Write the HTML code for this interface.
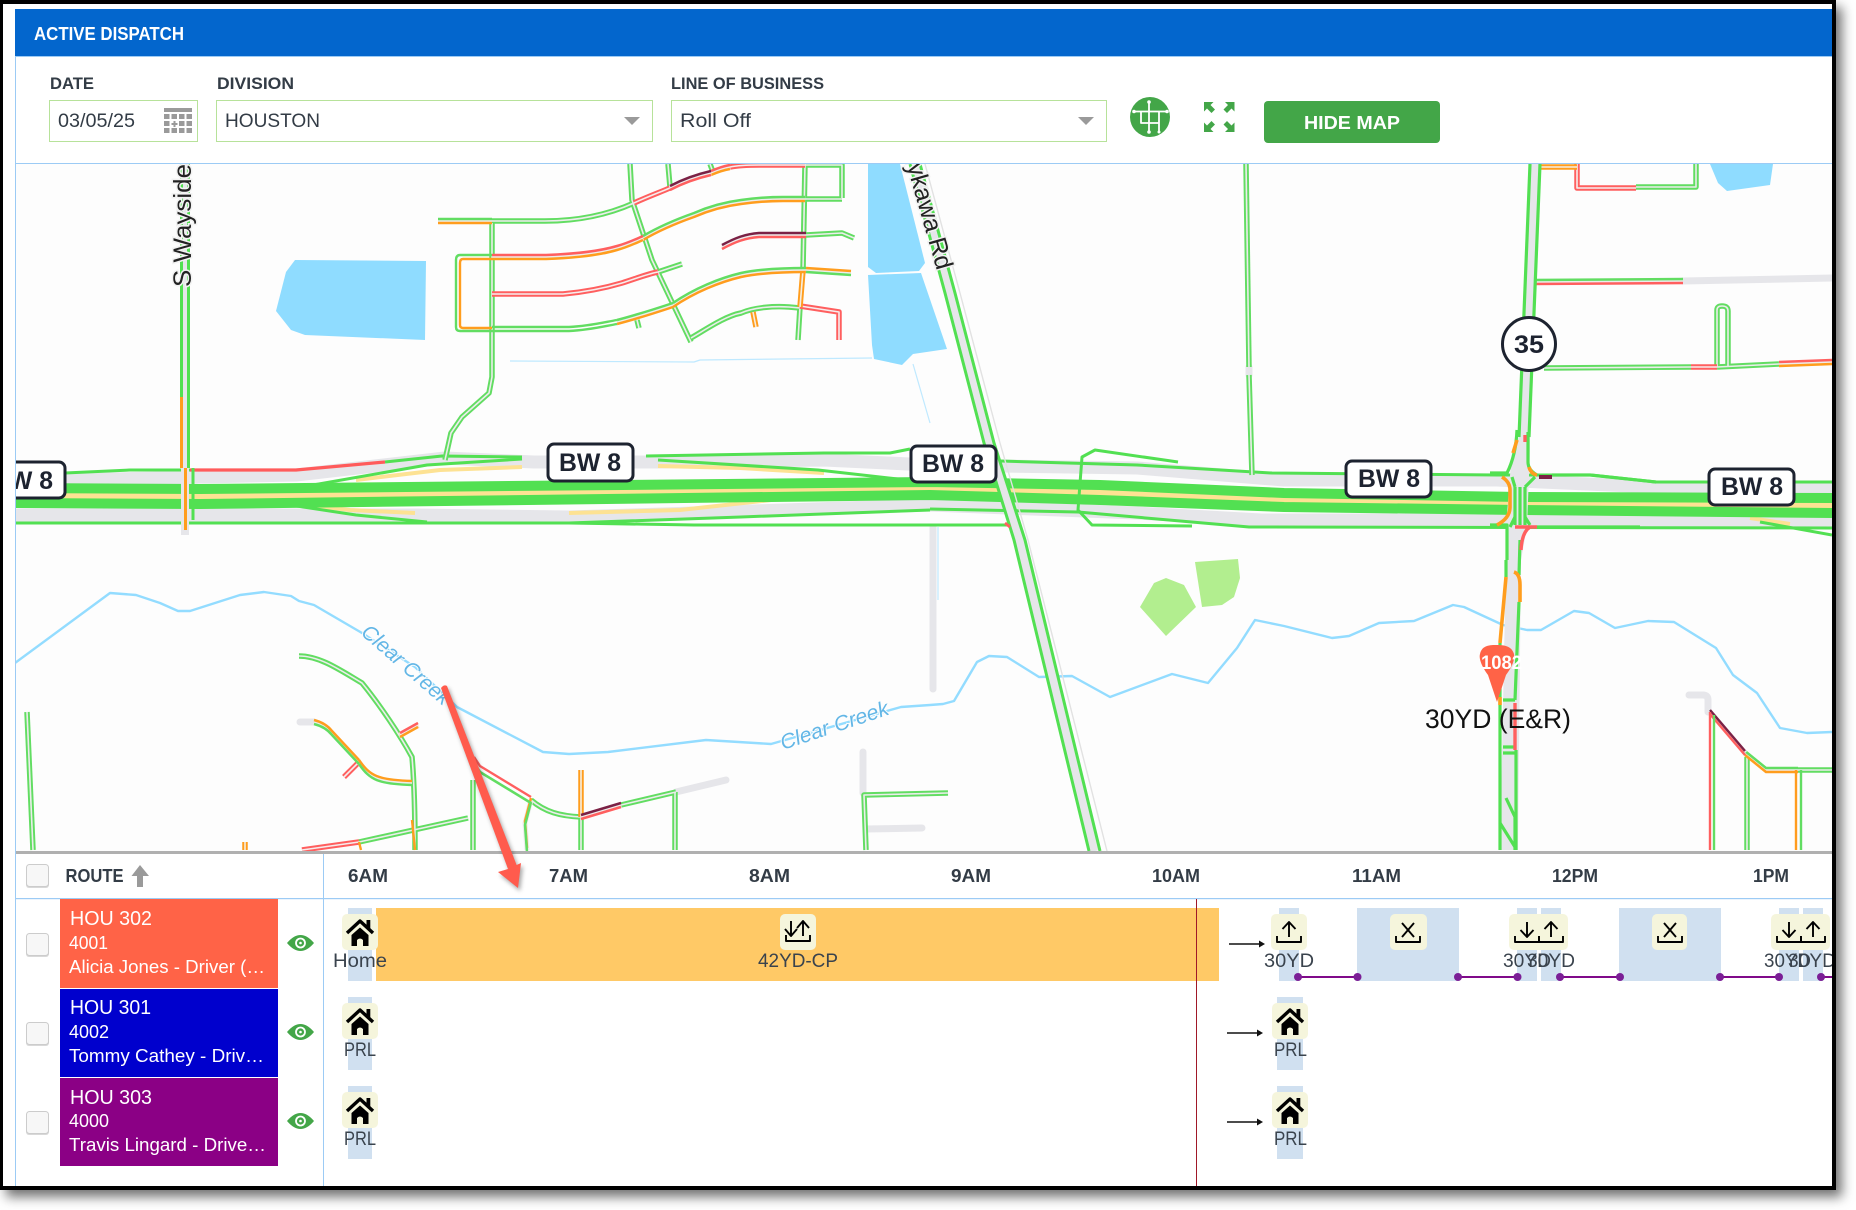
<!DOCTYPE html>
<html lang="en">
<head>
<meta charset="utf-8">
<title>Active Dispatch</title>
<style>
html,body{margin:0;padding:0;background:#fff;width:1856px;height:1210px;overflow:hidden}
#frame{position:absolute;left:0;top:0;width:1829px;height:1182px;border:solid #000;border-width:4px 4px 4px 3px;background:#fff;box-shadow:6px 7px 11px rgba(0,0,0,.55)}
svg{position:absolute;left:0;top:0}
text{font-family:"Liberation Sans",sans-serif}
.l{font-weight:700;font-size:17px;fill:#333c46}
.v{font-size:19px;fill:#333c46}
.w{fill:#fff}
.t{font-weight:700;font-size:18px;fill:#333c46}
.b{font-size:19px;fill:#3a434d}
.s{font-weight:700;font-size:25px;fill:#1d2330}
.c{font-style:italic;font-size:21px;fill:#62b6e6;stroke:#fdfdfd;stroke-width:2px;paint-order:stroke}
.r{font-size:25px;fill:#222;stroke:#f2f2f2;stroke-width:3px;paint-order:stroke}
.sh{fill:#fff;stroke:#1d2330;stroke-width:3}
path{stroke-linejoin:round}
</style>
</head>
<body>
<div id="frame"></div>
<svg width="1856" height="1210" viewBox="0 0 1856 1210" xmlns="http://www.w3.org/2000/svg">
<defs>
<clipPath id="mapclip"><rect x="16" y="164" width="1816" height="687"/></clipPath>
<clipPath id="rowclip"><rect x="16" y="899" width="1816" height="287"/></clipPath>

<g id="gg">
<path d="M492,221H545C575,221 605,216 634,203"/>
<path d="M805,165H842V198"/>
<path d="M805,199H842"/>
<path d="M658,272L682,264"/>
<path d="M492,223V377L489,393L462,417L451,433L445,460"/>
<path d="M630,164L632,200L652,260L691,342"/>
<path d="M691,338C705,330 725,316 741,313C755,307 775,306 789,307L800,308"/>
<path d="M805,164L803,270"/>
<path d="M800,307L798,340"/>
<path d="M668,164L670,187"/>
<path d="M710,164L713,172"/>
<path d="M637,320L639,328"/>
<path d="M806,235L842,233L854,238"/>
<path d="M1636,187H1696V164"/>
<path d="M1717,367V310Q1717,306 1722,306Q1728,306 1728,311V367"/>
<path d="M1544,368L1691,367"/>
<path d="M1717,367L1779,364"/>
<path d="M27,712L33,850"/>
<path d="M299,656C320,656 340,670 362,683C380,705 400,735 412,757Q415,790 415,850"/>
<path d="M359,842L468,818"/>
<path d="M473,780V850"/>
<path d="M531,800C545,812 560,816 581,817"/>
<path d="M621,805L676,792"/>
<path d="M581,817V850"/>
<path d="M675,792V850"/>
<path d="M948,793L864,795L866,850"/>
<path d="M1747,757V850"/>
<path d="M1798,770H1832"/>
<path d="M1246,164L1249,367"/>
<path d="M1249,375L1252,475"/>
<path d="M1535,164L1531,300"/>
<path d="M1527,372L1523,437"/>
</g>

<g id="rr">
<path d="M634,203C647,197 658,193 670,188"/>
<path d="M492,294H563C585,292 605,288 622,283C635,279 647,274 658,272"/>
<path d="M730,167C740,165 750,165 759,165H805"/>
<path d="M800,306L839,312V340"/>
<path d="M1577,164V188H1636"/>
<path d="M344,777L359,762"/>
<path d="M302,850L359,842"/>
<path d="M1691,367H1717"/>
</g>

<g id="oo">
<path d="M803,270L800,307"/>
<path d="M753,312L756,327"/>
<path d="M581,770V817"/>
<path d="M1538,167H1577"/>
<path d="M245,842V850"/>
<path d="M400,735L418,725"/>
</g>

<g id="grayr">
<path d="M1683,281L1832,278"/>
<path d="M726,780L676,792"/>
<path d="M863,752V793"/>
<path d="M866,829L922,828"/>
<path d="M933,527V689"/>
<path d="M1689,695H1703Q1708,695 1708,700V712"/>
<path d="M300,722L314,722"/>
<path d="M1249,367V375"/>
</g>

<g id="go">
<path d="M438,221H492"/>
<path d="M643,238C660,228 677,221 694,215C710,208 725,204 741,202C755,200 770,199 783,199H805"/>
<path d="M617,322C640,316 655,311 673,305"/>
<path d="M673,305C695,290 720,280 741,275C760,271 785,270 806,270"/>
<path d="M1745,753L1766,770H1798"/>
</g>
<g id="ro">
<path d="M492,257H546C575,256 600,253 617,248C628,245 636,241 643,238"/>
<path d="M711,173C718,170 724,168 730,167"/>
<path d="M1779,364L1832,362"/>
<path d="M400,735L418,725"/>
</g>
<g id="mr">
<path d="M670,188C685,180 698,176 711,173"/>
<path d="M722,247C735,240 745,236 759,235H806"/>
<path d="M581,817L621,805"/>
<path d="M1710,712L1745,753"/>
</g>
<g id="gr">
<path d="M1532,282L1683,281"/>
</g>
<g id="og">
<path d="M806,270L851,273"/>
<path d="M314,722C322,724 328,728 332,733L359,762"/>
<path d="M359,762C370,778 378,782 412,783"/>
<path d="M531,800L525,823L527,850"/>
</g>

<g id="house">
<path d="M0,14L13,2L26,14" fill="none" stroke="#000" stroke-width="3.4"/>
<rect x="19.5" y="1" width="3.8" height="9" fill="#000"/>
<path d="M4.5,16L13,8.5L21.5,16V27H16V21Q13,18 10,21V27H4.5Z" fill="#000"/>
</g>
<g id="up" fill="none" stroke="#000" stroke-width="1.9">
<path d="M0,0V15M-6.5,7L0,0L6.5,7"/>
<path d="M-12,14V20H12V14"/>
</g>
<g id="down" fill="none" stroke="#000" stroke-width="1.9">
<path d="M0,0V15M-6.5,8L0,15L6.5,8"/>
<path d="M-12,14V20H12V14"/>
</g>
<g id="xi" fill="none" stroke="#000" stroke-width="1.9">
<path d="M-6,1L6,15M6,1L-6,15"/>
<path d="M-12,14V20H12V14"/>
</g>
<g id="eye">
<path d="M-13.5,0Q0,-16 13.5,0Q0,16 -13.5,0Z" fill="#43a648"/>
<circle r="5.4" fill="#fff"/>
<circle r="3.6" fill="#43a648"/>
<circle r="1.3" fill="#fff"/>
</g>
<g id="cb">
<rect x="0" y="1" width="23" height="23" rx="3" fill="#d8d8d8"/>
<rect x=".5" y=".5" width="22" height="22" rx="3" fill="#f7f7f7" stroke="#cccccc"/>
</g>
<g id="bwt"><path d="M0,0H9.5L6.5,3L11,7.5L7.5,11L3,6.5L0,9.5Z" fill="#43a648"/></g>
</defs>

<!-- header -->
<rect x="15" y="9" width="1817" height="47" fill="#0366cd"/>
<rect x="15" y="56" width="1817" height="1" fill="#9ccbf5"/>
<text x="34" y="40" font-size="18" font-weight="700" class="w" textLength="150" lengthAdjust="spacingAndGlyphs">ACTIVE DISPATCH</text>

<text x="50" y="89" class="l" textLength="44" lengthAdjust="spacingAndGlyphs">DATE</text>
<text x="217" y="89" class="l" textLength="77" lengthAdjust="spacingAndGlyphs">DIVISION</text>
<text x="671" y="89" class="l" textLength="153" lengthAdjust="spacingAndGlyphs">LINE OF BUSINESS</text>

<rect x="49.5" y="100.5" width="148" height="41" fill="#fff" stroke="#b7e29a"/>
<rect x="216.5" y="100.5" width="436" height="41" fill="#fff" stroke="#b7e29a"/>
<rect x="671.5" y="100.5" width="435" height="41" fill="#fff" stroke="#b7e29a"/>
<text x="58" y="127" class="v" textLength="77" lengthAdjust="spacingAndGlyphs">03/05/25</text>
<text x="225" y="127" class="v" textLength="95" lengthAdjust="spacingAndGlyphs">HOUSTON</text>
<text x="680" y="127" class="v" textLength="71" lengthAdjust="spacingAndGlyphs">Roll Off</text>

<!-- calendar -->
<g fill="#9a9a9a">
<rect x="164" y="108" width="28" height="4"/>
<rect x="164" y="114" width="5.5" height="5"/><rect x="171.5" y="114" width="5.5" height="5"/><rect x="179" y="114" width="5.5" height="5"/><rect x="186.5" y="114" width="5.5" height="5"/>
<rect x="164" y="121" width="5.5" height="5"/><path d="M173.5,121h2v2h2v2h-2v2h-2v-2h-2v-2h2z"/><rect x="179" y="121" width="5.5" height="5"/><rect x="186.5" y="121" width="5.5" height="5"/>
<rect x="164" y="128" width="5.5" height="5"/><rect x="171.5" y="128" width="5.5" height="5"/><rect x="179" y="128" width="5.5" height="5"/><rect x="186.5" y="128" width="5.5" height="5"/>
</g>
<path d="M624,117H640L632,125Z" fill="#9a9a9a"/>
<path d="M1078,117H1094L1086,125Z" fill="#9a9a9a"/>

<!-- map button -->
<circle cx="1150" cy="117" r="20" fill="#43a648"/>
<g fill="none" stroke="#fff" stroke-width="1.8">
<path d="M1149,102V132M1134,111.5H1167M1141,111.5V123H1159M1159,111.5V132"/>
</g>
<g fill="#fff"><circle cx="1149" cy="102" r="1.8"/><circle cx="1149" cy="132" r="1.8"/><circle cx="1159" cy="132" r="1.5"/><circle cx="1134" cy="111.5" r="1.8"/><circle cx="1167" cy="111.5" r="1.8"/></g>

<!-- expand -->
<use href="#bwt" transform="translate(1204,102)"/>
<use href="#bwt" transform="translate(1234.5,102) scale(-1,1)"/>
<use href="#bwt" transform="translate(1204,132) scale(1,-1)"/>
<use href="#bwt" transform="translate(1234.5,132) scale(-1,-1)"/>

<rect x="1264" y="101" width="176" height="42" rx="4" fill="#43a648"/>
<text x="1304" y="129" font-size="18" font-weight="700" class="w" textLength="96" lengthAdjust="spacingAndGlyphs">HIDE MAP</text>

<!-- map -->
<rect x="15" y="163" width="1817" height="1" fill="#9ccbf5"/>
<rect x="15" y="164" width="1817" height="687" fill="#fdfdfd"/>
<g clip-path="url(#mapclip)">
<!-- water -->
<g fill="#8fdcff">
<path d="M295,260L426,261L425,340L305,335L291,330L276,311L286,272Z"/>
<path d="M868,164H900L925,263L919,271L876,273L868,267Z"/>
<path d="M868,275L921,273L947,349L913,354L902,365L874,359L872,345Z"/>
<path d="M1710,164H1773L1770,185L1727,191L1718,183Z"/>
</g>
<g fill="none" stroke="#bfe9ff" stroke-width="1.2">
<path d="M510,361L694,362L700,360L872,358"/>
<path d="M913,364L930,423"/>
<path d="M938,527V600"/>
</g>
<g fill="#b2ee8f">
<path d="M1140,607L1154,583L1166,578L1184,585L1196,607L1166,636Z"/>
<path d="M1195,562L1238,559L1240,578L1234,597L1222,605L1202,607Z"/>
</g>
<!-- creek -->
<path fill="none" stroke="#93dcff" stroke-width="2.4" d="M15,663L110,593L136,595L160,603L178,611L190,611L240,595L264,592L291,596L299,601L314,605L362,633L415,667L457,707L543,752L569,754L608,752L706,740L771,744L901,707L930,705L943,704L954,701L977,662L989,656L1007,657L1039,677L1072,676L1110,697L1172,674L1208,683L1237,648L1255,620L1284,626L1332,638L1349,636L1379,623L1414,621L1453,605L1464,607L1503,625L1527,630L1541,630L1574,611L1589,613L1615,628L1648,621L1674,622L1716,648L1733,675L1757,693L1780,728L1807,733L1832,732"/>

<!-- casing roads -->
<use href="#grayr" fill="none" stroke="#e6e6ea" stroke-width="7" stroke-linecap="round"/>

<!-- freeway frontage -->
<g fill="none" stroke="#e6e6ea" stroke-width="13">
<path d="M15,482L65,480L296,475L445,458L534,462L658,462L824,460L930,465L1137,468L1284,480L1497,480L1656,487L1832,489"/>
<path d="M15,515L415,515L569,517L694,513L930,505L1137,513L1261,520L1832,520"/>
</g>
<!-- yellow ramps -->
<g fill="none" stroke="#fde293" stroke-width="4">
<path d="M356,480L440,470L522,467"/>
<path d="M658,466L740,468L824,473"/>
<path d="M308,505L350,510L415,513"/>
<path d="M569,513L680,510L771,500"/>
<path d="M1750,504L1790,498"/>
<path d="M1750,518L1790,524"/>
</g>
<!-- main carriageway -->
<path fill="#fde293" d="M15,488L930,482L1284,493L1520,497L1832,498V513L1520,510L1284,507L930,495L15,502Z"/>
<g fill="none" stroke="#52e052" stroke-width="10">
<path d="M15,488L200,489L930,482L1100,485L1284,493L1520,497L1832,498"/>
<path d="M15,503L200,504L930,495L1100,500L1284,507L1520,510L1832,513"/>
</g>
<!-- frontage edges -->
<g fill="none" stroke="#52e052" stroke-width="3">
<path d="M65,473L130,470H190"/>
<path d="M385,462L442,456L522,457"/>
<path d="M646,456L824,453L890,453L910,449"/>
<path d="M1001,461L1137,465L1272,473L1497,475L1591,475L1656,482L1832,482"/>
<path d="M296,488L427,465L522,459"/>
<path d="M658,460L818,470L907,480"/>
<path d="M15,523L569,523L694,525L930,525L1007,525"/>
<path d="M569,523L741,517L930,510"/>
<path d="M290,505L356,515L427,522"/>
<path d="M930,509L1078,512L1249,527L1832,528"/>
<path d="M1178,462L1095,450L1082,457L1078,510L1092,525L1192,526"/>
<path d="M1760,522L1832,535"/>
</g>
<path fill="none" stroke="#ff5b5b" stroke-width="3.2" d="M190,470H296L385,462"/>

<!-- minor: green double -->
<use href="#gg" fill="none" stroke="#62dd62" stroke-width="5.5"/>
<use href="#gg" fill="none" stroke="#ececec" stroke-width="1.6"/>
<use href="#rr" fill="none" stroke="#ff5f5f" stroke-width="5.5"/>
<use href="#rr" fill="none" stroke="#f6eded" stroke-width="1.6"/>
<use href="#oo" fill="none" stroke="#ff9d1e" stroke-width="5.5"/>
<use href="#oo" fill="none" stroke="#f5eee2" stroke-width="1.6"/>

<!-- minor: two colour -->
<g fill="none" stroke-width="2.5">
<use href="#go" stroke="#ececec" stroke-width="5"/>
<use href="#go" stroke="#62dd62" transform="translate(0,-2)"/>
<use href="#go" stroke="#ff9d1e" transform="translate(0,2)"/>
<use href="#ro" stroke="#ececec" stroke-width="5"/>
<use href="#ro" stroke="#ff5f5f" transform="translate(0,-2)"/>
<use href="#ro" stroke="#ff9d1e" transform="translate(0,2)"/>
<use href="#mr" stroke="#ececec" stroke-width="5"/>
<use href="#mr" stroke="#7b2145" transform="translate(0,-2)"/>
<use href="#mr" stroke="#ff5f5f" transform="translate(0,2)"/>
<use href="#gr" stroke="#ececec" stroke-width="5"/>
<use href="#gr" stroke="#62dd62" transform="translate(0,-2)"/>
<use href="#gr" stroke="#ff5f5f" transform="translate(0,2)"/>
<use href="#og" stroke="#ececec" stroke-width="5"/>
<use href="#og" stroke="#ff9d1e" transform="translate(0,-2)"/>
<use href="#og" stroke="#62dd62" transform="translate(0,2)"/>
</g>
<!-- rectangle block -->
<path fill="none" stroke="#62dd62" stroke-width="2.4" d="M492,255H460Q456,255 456,260V327Q456,331 460,331H569C590,330 605,326 617,324"/>
<path fill="none" stroke="#ff9d1e" stroke-width="2.4" d="M492,259H463Q460,259 460,263V325Q460,328 463,328H492"/>
<path fill="none" stroke="#62dd62" stroke-width="2.4" d="M492,327H569C590,326 605,322 617,320"/>
<path fill="none" stroke="#ff5f5f" stroke-width="2.4" d="M1710,712V850"/>
<path fill="none" stroke="#62dd62" stroke-width="2.4" d="M1714,715V850"/>
<path fill="none" stroke="#ff9d1e" stroke-width="2.4" d="M1796,770V850"/>
<path fill="none" stroke="#62dd62" stroke-width="2.4" d="M1801,770V850"/>
<path fill="none" stroke="#ff9d1e" stroke-width="2.4" d="M412,820L415,850"/>
<path fill="none" stroke="#ff9d1e" stroke-width="2.4" d="M359,842L361,850"/>
<path fill="none" stroke="#ff5f5f" stroke-width="2.4" d="M474,757L480,766L531,797"/>
<path fill="none" stroke="#62dd62" stroke-width="2.6" d="M472,760L480,772L531,803"/>

<!-- Mykawa -->
<g fill="none">
<path stroke="#e6e6ea" stroke-width="10" d="M915,164L950,293L989,443L1020,540L1095,851"/>
<path stroke="#e2e2e2" stroke-width="1.4" d="M925,164L960,293L1000,443L1028,540L1107,851"/>
<path stroke="#52e052" stroke-width="3" d="M910,164L945,293L984,443L1014,540L1089,851"/>
<path stroke="#52e052" stroke-width="3" d="M920,164L955,293L994,443L1025,540L1100,851"/>
</g>
<!-- S Wayside -->
<g fill="none" stroke-width="3">
<path stroke="#e6e6ea" stroke-width="8" d="M185,164V535"/>
<path stroke="#52e052" d="M181.5,164V397"/>
<path stroke="#ff9d1e" d="M181.5,397V468"/>
<path stroke="#52e052" d="M188.5,164V468"/>
<path stroke="#ff9d1e" d="M185.5,468V530"/>
<path stroke="#52e052" d="M193,468V520"/>
</g>
<!-- SH 35 -->
<path fill="#e6e6ea" d="M1529,164H1541L1530,437V450L1527,527L1521,560L1518,850H1500L1506,560V527L1512,450L1519,437Z"/>
<g fill="none" stroke="#52e052" stroke-width="3.2">
<path d="M1530,164L1519,437"/>
<path d="M1540,164L1529,437"/>
<path d="M1517,430Q1516,455 1507,473H1490"/>
<path d="M1528,432V462Q1528,470 1537,475"/>
<path d="M1552,475H1590L1656,482"/>
<path d="M1490,525H1507V560"/>
<path d="M1515,487V525M1520,487V525M1525,487V525"/>
<path d="M1512,477L1515,487M1535,477L1525,487"/>
<path d="M1510,527L1515,517M1530,525L1525,517"/>
<path d="M1537,527H1640"/>
<path d="M1506,560V577"/>
<path d="M1500,643V850"/>
<path d="M1520,540L1519,575"/>
<path d="M1519,602L1515,700"/>
<path d="M1516,750V850"/>
<path d="M1503,700H1515M1503,747H1515M1503,753H1515"/>
<path d="M1506,798L1515,817L1515,850"/>
<path d="M1500,823L1515,847"/>
</g>
<g fill="none" stroke="#ff9d1e" stroke-width="3.6">
<path d="M1517,440L1513,453"/>
<path d="M1502,477Q1510,482 1510,490V507Q1510,518 1497,525"/>
<path d="M1506,577L1500,643"/>
<path d="M1514,572Q1520,574 1520,585V602"/>
<path d="M1500,697V705"/>
<path d="M1529,467Q1531,474 1537,475"/>
</g>
<g fill="none" stroke="#ff5f5f" stroke-width="3.4">
<path d="M1525,435V442"/>
<path d="M1515,527H1537M1530,527Q1522,532 1521,550"/>
<path d="M1515,703V750"/>
</g>
<path stroke="#7b2145" stroke-width="4" d="M1539,477H1552"/>
<path fill="none" stroke="#ff5f5f" stroke-width="3" d="M1010,527L1005,523"/>
<!-- road labels -->
<text class="r" transform="translate(191,287) rotate(-90)" textLength="123" lengthAdjust="spacingAndGlyphs">S Wayside</text>
<text class="r" text-anchor="end" transform="translate(937,271) rotate(74)">Mykawa Rd</text>
<text class="c" transform="translate(360,634) rotate(41)" textLength="110" lengthAdjust="spacingAndGlyphs">Clear Creek</text>
<text class="c" transform="translate(783,750) rotate(-18.5)" textLength="113" lengthAdjust="spacingAndGlyphs">Clear Creek</text>

<!-- shields -->
<rect class="sh" x="-30" y="462" width="95" height="36" rx="6"/>
<text class="s" x="9" y="489" textLength="44" lengthAdjust="spacingAndGlyphs">W 8</text>
<rect class="sh" x="548" y="444" width="85" height="37" rx="6"/>
<text class="s" x="559" y="471" textLength="62" lengthAdjust="spacingAndGlyphs">BW 8</text>
<rect class="sh" x="911" y="446" width="85" height="36" rx="6"/>
<text class="s" x="922" y="472" textLength="62" lengthAdjust="spacingAndGlyphs">BW 8</text>
<rect class="sh" x="1346" y="461" width="85" height="36" rx="6"/>
<text class="s" x="1358" y="487" textLength="62" lengthAdjust="spacingAndGlyphs">BW 8</text>
<rect class="sh" x="1709" y="469" width="85" height="36" rx="6"/>
<text class="s" x="1721" y="495" textLength="62" lengthAdjust="spacingAndGlyphs">BW 8</text>
<circle class="sh" cx="1529" cy="344" r="26.5"/>
<text class="s" x="1514" y="353" textLength="30" lengthAdjust="spacingAndGlyphs">35</text>

<!-- pin -->
<path d="M1497,702L1488,675C1480,664 1479,657 1480,654C1482,645 1490,645 1497,645C1506,645 1512,647 1514,654C1515,660 1512,667 1506,675Z" fill="#ff6347"/>
<text x="1481" y="669" font-size="19" font-weight="700" class="w" textLength="41" lengthAdjust="spacingAndGlyphs">1082</text>
<text x="1425" y="728" font-size="27" fill="#111" textLength="146" lengthAdjust="spacingAndGlyphs">30YD (E&amp;R)</text>
</g>
<rect x="15" y="851" width="1817" height="3" fill="#b0b0b0"/>

<!-- table chrome -->
<rect x="15" y="57" width="1" height="1129" fill="#9ccbf5"/>
<rect x="15" y="898" width="1817" height="1.2" fill="#9ccbf5"/>
<rect x="323" y="854" width="1" height="332" fill="#9ccbf5"/>

<use href="#cb" transform="translate(26,864)"/>
<text x="65.5" y="882" class="t" textLength="58" lengthAdjust="spacingAndGlyphs">ROUTE</text>
<path d="M140,865L149,876H143V887H137V876H131.5Z" fill="#9a9a9a"/>

<text x="348" y="882" class="t" textLength="40" lengthAdjust="spacingAndGlyphs">6AM</text>
<text x="549" y="882" class="t" textLength="39" lengthAdjust="spacingAndGlyphs">7AM</text>
<text x="749" y="882" class="t" textLength="41" lengthAdjust="spacingAndGlyphs">8AM</text>
<text x="951" y="882" class="t" textLength="40" lengthAdjust="spacingAndGlyphs">9AM</text>
<text x="1152" y="882" class="t" textLength="48" lengthAdjust="spacingAndGlyphs">10AM</text>
<text x="1352" y="882" class="t" textLength="49" lengthAdjust="spacingAndGlyphs">11AM</text>
<text x="1552" y="882" class="t" textLength="46" lengthAdjust="spacingAndGlyphs">12PM</text>
<text x="1753" y="882" class="t" textLength="36" lengthAdjust="spacingAndGlyphs">1PM</text>

<!-- left rows -->
<use href="#cb" transform="translate(26,933)"/>
<use href="#cb" transform="translate(26,1022)"/>
<use href="#cb" transform="translate(26,1111)"/>
<rect x="60" y="899" width="218" height="89" fill="#ff6347"/>
<rect x="60" y="989" width="218" height="88" fill="#0000cd"/>
<rect x="60" y="1078" width="218" height="88" fill="#8b0085"/>
<g class="w">
<text x="70" y="925" font-size="20" textLength="82" lengthAdjust="spacingAndGlyphs">HOU 302</text>
<text x="69" y="949" font-size="18" textLength="39" lengthAdjust="spacingAndGlyphs">4001</text>
<text x="69" y="973" font-size="18" textLength="196" lengthAdjust="spacingAndGlyphs">Alicia Jones - Driver (…</text>
<text x="70" y="1014" font-size="20" textLength="81" lengthAdjust="spacingAndGlyphs">HOU 301</text>
<text x="69" y="1038" font-size="18" textLength="40" lengthAdjust="spacingAndGlyphs">4002</text>
<text x="69" y="1062" font-size="18" textLength="195" lengthAdjust="spacingAndGlyphs">Tommy Cathey - Driv…</text>
<text x="70" y="1104" font-size="20" textLength="82" lengthAdjust="spacingAndGlyphs">HOU 303</text>
<text x="69" y="1127" font-size="18" textLength="40" lengthAdjust="spacingAndGlyphs">4000</text>
<text x="69" y="1151" font-size="18" textLength="197" lengthAdjust="spacingAndGlyphs">Travis Lingard - Drive…</text>
</g>
<use href="#eye" transform="translate(300.5,943)"/>
<use href="#eye" transform="translate(300.5,1032)"/>
<use href="#eye" transform="translate(300.5,1121)"/>

<!-- timeline -->
<g clip-path="url(#rowclip)">
<g fill="#d0e0f0">
<rect x="348" y="908" width="24" height="73"/>
<rect x="348" y="997" width="24" height="73"/>
<rect x="348" y="1086" width="24" height="73"/>
<rect x="1279" y="908" width="20" height="73"/>
<rect x="1357" y="908" width="102" height="73"/>
<rect x="1517" y="908" width="20" height="73"/>
<rect x="1541" y="908" width="20" height="73"/>
<rect x="1619" y="908" width="102" height="73"/>
<rect x="1779" y="908" width="20" height="73"/>
<rect x="1803" y="908" width="20" height="73"/>
<rect x="1277" y="997" width="26" height="73"/>
<rect x="1277" y="1086" width="26" height="73"/>
</g>
<rect x="376" y="908" width="843" height="73" fill="#ffc966"/>
<rect x="1196" y="854" width="1" height="332" fill="#a01828"/>
<rect x="1196" y="893" width="1" height="5" fill="#fff"/>
<g fill="#f5f5dc">
<rect x="342" y="914" width="36" height="36" rx="5"/>
<rect x="342" y="1003" width="36" height="36" rx="5"/>
<rect x="342" y="1092" width="36" height="36" rx="5"/>
<rect x="780" y="914" width="36" height="36" rx="5"/>
<rect x="1271" y="914" width="36" height="36" rx="5"/>
<rect x="1390" y="914" width="37" height="36" rx="5"/>
<rect x="1509" y="914" width="36" height="36" rx="5"/>
<rect x="1533" y="914" width="35" height="36" rx="5"/>
<rect x="1652" y="914" width="35" height="36" rx="5"/>
<rect x="1771" y="914" width="36" height="36" rx="5"/>
<rect x="1795" y="914" width="35" height="36" rx="5"/>
<rect x="1272" y="1003" width="36" height="36" rx="5"/>
<rect x="1272" y="1092" width="36" height="36" rx="5"/>
</g>
<use href="#house" transform="translate(347,919)"/>
<use href="#house" transform="translate(347,1008)"/>
<use href="#house" transform="translate(347,1097)"/>
<use href="#house" transform="translate(1277,1008)"/>
<use href="#house" transform="translate(1277,1097)"/>
<use href="#up" transform="translate(1289,922)"/>
<use href="#xi" transform="translate(1408,922)"/>
<use href="#down" transform="translate(1527,922)"/>
<use href="#up" transform="translate(1551,922)"/>
<use href="#xi" transform="translate(1670,922)"/>
<use href="#down" transform="translate(1789,922)"/>
<use href="#up" transform="translate(1813,922)"/>
<!-- load/unload icon -->
<g fill="none" stroke="#000" stroke-width="1.9">
<path d="M791,921V935M785,929L791,936L797,929"/>
<path d="M803,936V921M797,928L803,921L809,928"/>
<path d="M786,935V941H810V935"/>
</g>
<text x="333" y="967" class="b" textLength="54" lengthAdjust="spacingAndGlyphs">Home</text>
<text x="344" y="1056" class="b" textLength="32" lengthAdjust="spacingAndGlyphs">PRL</text>
<text x="344" y="1145" class="b" textLength="32" lengthAdjust="spacingAndGlyphs">PRL</text>
<text x="758" y="967" class="b" textLength="80" lengthAdjust="spacingAndGlyphs">42YD-CP</text>
<text x="1264" y="967" class="b" textLength="50" lengthAdjust="spacingAndGlyphs">30YD</text>
<text x="1503" y="967" class="b" textLength="48" lengthAdjust="spacingAndGlyphs">30YD</text>
<text x="1527" y="967" class="b" textLength="48" lengthAdjust="spacingAndGlyphs">30YD</text>
<text x="1764" y="967" class="b" textLength="47" lengthAdjust="spacingAndGlyphs">30YD</text>
<text x="1788" y="967" class="b" textLength="48" lengthAdjust="spacingAndGlyphs">30YD</text>
<text x="1274" y="1056" class="b" textLength="33" lengthAdjust="spacingAndGlyphs">PRL</text>
<text x="1274" y="1145" class="b" textLength="33" lengthAdjust="spacingAndGlyphs">PRL</text>

<!-- arrows -->
<g stroke="#111" stroke-width="1.6" fill="#111">
<path d="M1229,944H1260"/><path d="M1259,940.5L1265,944L1259,947.5Z" stroke="none"/>
<path d="M1227,1033H1258"/><path d="M1257,1029.5L1263,1033L1257,1036.5Z" stroke="none"/>
<path d="M1227,1122H1258"/><path d="M1257,1118.5L1263,1122L1257,1125.5Z" stroke="none"/>
</g>
<!-- connectors -->
<g stroke="#800a8a" stroke-width="2">
<path d="M1298,977H1357M1458,977H1517.5M1560,977H1620M1720,977H1779M1821,977H1840"/>
</g>
<g fill="#7b1f96">
<ellipse cx="1298" cy="977" rx="4" ry="4"/><ellipse cx="1357.5" cy="977" rx="4" ry="4"/>
<ellipse cx="1458" cy="977" rx="4" ry="4"/><ellipse cx="1517.5" cy="977" rx="4" ry="4"/>
<ellipse cx="1560" cy="977" rx="4" ry="4"/><ellipse cx="1620" cy="977" rx="4" ry="4"/>
<ellipse cx="1720" cy="977" rx="4" ry="4"/><ellipse cx="1779" cy="977" rx="4" ry="4"/>
<ellipse cx="1821" cy="977" rx="4" ry="4"/>
</g>
</g>

<!-- annotation arrow -->
<g style="filter:drop-shadow(2px 3px 2px rgba(0,0,0,.35))">
<path d="M441,688Q444,684 447,686L517,866L508,869Z" fill="#ff5b4d"/>
<path d="M518,888L498,872L508,869L521,863Z" fill="#ff5b4d"/>
</g>
</svg>
</body>
</html>
